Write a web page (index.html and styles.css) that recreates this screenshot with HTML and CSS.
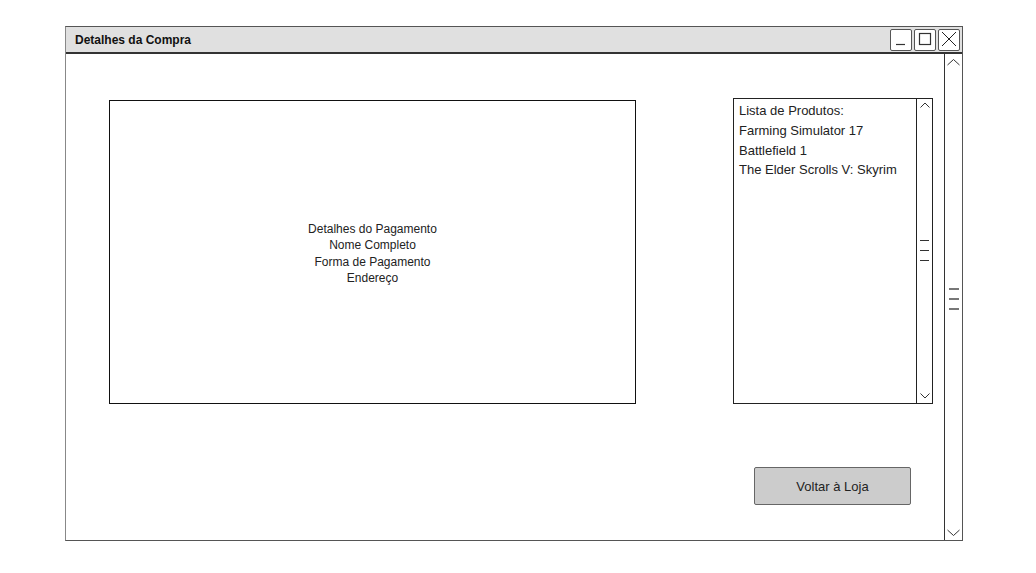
FILE: index.html
```html
<!DOCTYPE html>
<html lang="pt">
<head>
<meta charset="utf-8">
<title>Detalhes da Compra</title>
<link rel="stylesheet" href="styles.css">
</head>
<body>
<div class="window">
  <div class="titlebar">
    <span class="title">Detalhes da Compra</span>
    <div class="wbtns">
      <span class="wbtn"><svg width="22" height="22" viewBox="0 0 22 22"><line x1="6" y1="16.5" x2="15" y2="16.5" stroke="#333" stroke-width="1.2"/></svg></span>
      <span class="wbtn"><svg width="22" height="22" viewBox="0 0 22 22"><rect x="5.5" y="5.5" width="11" height="11" fill="none" stroke="#333" stroke-width="1.2"/></svg></span>
      <span class="wbtn"><svg width="22" height="22" viewBox="0 0 22 22"><path d="M4 4 L18 18 M18 4 L4 18" stroke="#222" stroke-width="1"/></svg></span>
    </div>
  </div>
  <div class="content">
    <div class="canvas">
      <div class="details">
        <p>Detalhes do Pagamento</p>
        <p>Nome Completo</p>
        <p>Forma de Pagamento</p>
        <p>Endereço</p>
      </div>
      <div class="side">
        <div class="list">
          <ul class="items">
            <li>Lista de Produtos:</li>
            <li>Farming Simulator 17</li>
            <li>Battlefield 1</li>
            <li>The Elder Scrolls V: Skyrim</li>
          </ul>
          <div class="vscroll small">
            <svg class="chev" width="14" height="8" viewBox="0 0 14 8"><polyline points="2.5,6.5 7,2 11.5,6.5" fill="none" stroke="#333" stroke-width="1"/></svg>
            <div class="grip"><i></i><i></i><i></i></div>
            <svg class="chev" width="14" height="8" viewBox="0 0 14 8"><polyline points="2.5,1.5 7,6 11.5,1.5" fill="none" stroke="#333" stroke-width="1"/></svg>
          </div>
        </div>
        <button class="back">Voltar à Loja</button>
      </div>
    </div>
    <div class="vscroll big">
      <svg class="chev" width="17" height="10" viewBox="0 0 17 10"><polyline points="2.5,8 8.5,2.5 14.5,8" fill="none" stroke="#333" stroke-width="1"/></svg>
      <div class="grip"><i></i><i></i><i></i></div>
      <svg class="chev" width="17" height="10" viewBox="0 0 17 10"><polyline points="2.5,2 8.5,7.5 14.5,2" fill="none" stroke="#333" stroke-width="1"/></svg>
    </div>
  </div>
</div>
</body>
</html>
```

FILE: styles.css
```css
* { box-sizing: border-box; }
html, body { margin: 0; padding: 0; background: #fff; }
body {
  font-family: "Liberation Sans", Arial, sans-serif;
  font-size: 12px;
  color: #222;
}
.window {
  margin: 26px 0 0 65px;
  width: 898px;
  height: 515px;
  border: 1px solid #555;
  border-left-color: #888;
  display: flex;
  flex-direction: column;
}
.titlebar {
  height: 27px;
  flex: none;
  background: #e0e0e0;
  border-bottom: 2px solid #333;
  display: flex;
  align-items: center;
  justify-content: space-between;
  padding: 0 2px 0 9px;
}
.title { font-weight: bold; font-size: 12px; color: #111; }
.wbtns { display: flex; gap: 2px; }
.wbtn {
  width: 22px; height: 22px;
  border: 1.5px solid #555;
  border-radius: 2px;
  background: #fff;
  display: flex;
}
.wbtn svg { margin: -1.5px; }
.content { flex: 1; display: flex; min-height: 0; }
.canvas {
  flex: 1;
  display: flex;
  align-items: flex-start;
  padding: 44px 0 0 43px;
}
.details {
  width: 527px;
  height: 304px;
  margin-top: 2px;
  padding-top: 3px;
  border: 1px solid #111;
  display: flex;
  flex-direction: column;
  justify-content: center;
  align-items: center;
  line-height: 16.4px;
  text-align: center;
}
.details p { margin: 0; }
.side {
  margin-left: 97px;
  width: 200px;
  display: flex;
  flex-direction: column;
}
.list {
  height: 306px;
  border: 1px solid #222;
  display: flex;
}
.items {
  list-style: none;
  margin: 0;
  padding: 2px 0 0 5px;
  flex: 1;
  font-size: 13px;
  line-height: 19.8px;
}
.vscroll {
  display: flex;
  flex-direction: column;
  align-items: center;
  justify-content: space-between;
  border-left: 1px solid #222;
}
.vscroll.small { width: 16px; padding: 2px 0 3px; }
.vscroll.big { width: 18px; padding: 3px 0 2px; border-left-color: #333; }
.grip { display: flex; flex-direction: column; }
.small .grip { gap: 8px; }
.small .grip i { display: block; width: 9px; height: 2px; border-top: 1px solid #333; }
.big .grip { gap: 8px; margin-top: 2px; }
.big .grip i { display: block; width: 10px; height: 2px; background: #777; }
.back {
  margin: 63px 0 0 21px;
  width: 157px;
  height: 38px;
  background: #ccc;
  border: 1.5px solid #666;
  border-radius: 2px;
  font-family: inherit;
  font-size: 13px;
  color: #222;
  padding: 0;
}
```
